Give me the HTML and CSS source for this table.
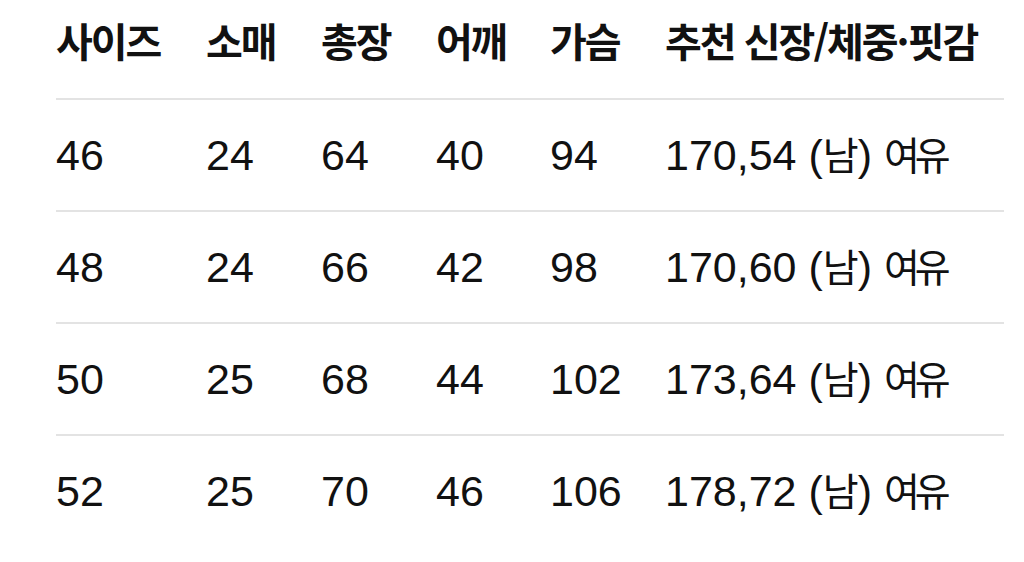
FILE: index.html
```html
<!DOCTYPE html>
<html lang="ko">
<head>
<meta charset="utf-8">
<link rel="stylesheet" href="styles.css">
</head>
<body>
<div class="table">
  <div class="row head">
    <div class="cell">사이즈</div>
    <div class="cell">소매</div>
    <div class="cell">총장</div>
    <div class="cell">어깨</div>
    <div class="cell">가슴</div>
    <div class="cell">추천 신장/체중·핏감</div>
  </div>
  <div class="row">
    <div class="cell">46</div><div class="cell">24</div><div class="cell">64</div><div class="cell">40</div><div class="cell">94</div>
    <div class="cell">170,54 (<span class="ko">남</span>) <span class="ko">여유</span></div>
  </div>
  <div class="row">
    <div class="cell">48</div><div class="cell">24</div><div class="cell">66</div><div class="cell">42</div><div class="cell">98</div>
    <div class="cell">170,60 (<span class="ko">남</span>) <span class="ko">여유</span></div>
  </div>
  <div class="row">
    <div class="cell">50</div><div class="cell">25</div><div class="cell">68</div><div class="cell">44</div><div class="cell">102</div>
    <div class="cell">173,64 (<span class="ko">남</span>) <span class="ko">여유</span></div>
  </div>
  <div class="row last">
    <div class="cell">52</div><div class="cell">25</div><div class="cell">70</div><div class="cell">46</div><div class="cell">106</div>
    <div class="cell">178,72 (<span class="ko">남</span>) <span class="ko">여유</span></div>
  </div>
</div>
</body>
</html>
```

FILE: styles.css
```css
html, body {
  margin: 0;
  padding: 0;
  background: #ffffff;
}
body {
  font-family: "Liberation Sans", "Noto Sans CJK KR", sans-serif;
  color: #111111;
}
.table {
  margin-left: 56px;
  width: 948px;
}
.row {
  display: grid;
  grid-template-columns: 150px 115px 115px 114px 115px 1fr;
  align-items: center;
  height: 110px;
  border-bottom: 2px solid #e3e3e3;
  font-size: 43px;
}
.row.head {
  height: 80px;
  padding-bottom: 18px;
  font-family: "Noto Sans CJK KR", sans-serif;
  font-weight: 600;
  font-size: 40px;
  letter-spacing: -2px;
}
.row.last {
  border-bottom: none;
}
.cell {
  white-space: nowrap;
  line-height: 1;
}
.ko {
  font-family: "Noto Sans CJK KR", sans-serif;
  font-size: 39px;
  letter-spacing: -5px;
  margin-right: 4px;
}
```
